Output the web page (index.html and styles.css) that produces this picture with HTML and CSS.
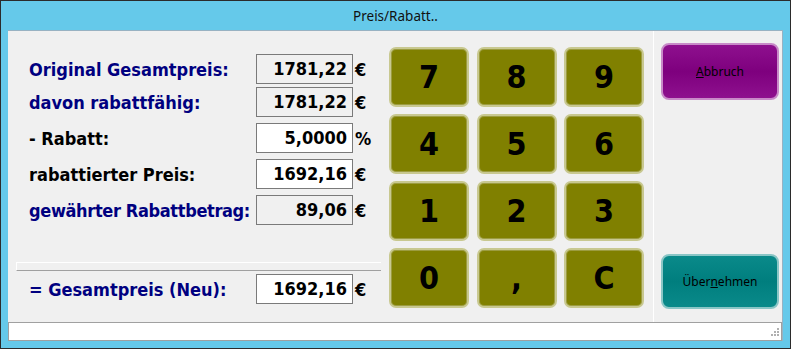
FILE: index.html
```html
<!DOCTYPE html>
<html lang="de">
<head>
<meta charset="utf-8">
<title>Preis/Rabatt..</title>
<link rel="stylesheet" href="styles.css">
</head>
<body>
<div class="window">
  <div class="titlebar">Preis/Rabatt..</div>
  <div class="client">
    <div class="main">
      <div class="form">
        <div class="row first"><span class="label navy">Original Gesamtpreis:</span><span class="box ro">1781,22</span><span class="unit">€</span></div>
        <div class="row tight"><span class="label navy">davon rabattfähig:</span><span class="box ro">1781,22</span><span class="unit">€</span></div>
        <div class="row"><span class="label">- Rabatt:</span><span class="box">5,0000</span><span class="unit">%</span></div>
        <div class="row"><span class="label">rabattierter Preis:</span><span class="box">1692,16</span><span class="unit">€</span></div>
        <div class="row"><span class="label navy narrow">gewährter Rabattbetrag:</span><span class="box ro">89,06</span><span class="unit">€</span></div>
        <div class="sep"></div>
        <div class="row total"><span class="label navy">= Gesamtpreis (Neu):</span><span class="box">1692,16</span><span class="unit">€</span></div>
      </div>
      <div class="keypad">
        <div class="key">7</div><div class="key">8</div><div class="key">9</div>
        <div class="key">4</div><div class="key">5</div><div class="key">6</div>
        <div class="key">1</div><div class="key">2</div><div class="key">3</div>
        <div class="key">0</div><div class="key">,</div><div class="key">C</div>
      </div>
      <div class="side">
        <div class="act abort"><span><u>A</u>bbruch</span></div>
        <div class="act ok"><span>Über<u>n</u>ehmen</span></div>
      </div>
    </div>
    <div class="status">
      <svg class="grip" width="12" height="12" viewBox="0 0 12 12">
        <rect x="9" y="1" width="2" height="2" fill="#b0b0b0"/>
        <rect x="6" y="4" width="2" height="2" fill="#b0b0b0"/>
        <rect x="9" y="4" width="2" height="2" fill="#b0b0b0"/>
        <rect x="3" y="7" width="2" height="2" fill="#b0b0b0"/>
        <rect x="6" y="7" width="2" height="2" fill="#b0b0b0"/>
        <rect x="9" y="7" width="2" height="2" fill="#b0b0b0"/>
      </svg>
    </div>
  </div>
</div>
</body>
</html>
```
FILE: styles.css
```css
* { box-sizing: border-box; }
body { margin: 0; font-family: "DejaVu Sans Condensed", "DejaVu Sans", sans-serif; }

.window {
  width: 791px; height: 349px;
  border: 1px solid #2b2b2b;
  background: #65c9ea;
  display: flex; flex-direction: column;
  padding: 0 7px 7px 7px;
}
.titlebar {
  height: 29px; flex: none;
  display: flex; align-items: center; justify-content: center;
  font: 13.5px "Noto Sans", sans-serif; color: #111;
  padding-top: 1px;
}
.client {
  flex: 1;
  display: flex; flex-direction: column;
  background: #f0f0f0;
  border-top: 1px solid #98b2c2;
  border-right: 1px solid #98b2c2;
}
.main { height: 291px; display: flex; flex: none; }

.form {
  width: 373px;
  padding: 23px 0 0 8px;
  display: flex; flex-direction: column;
}
.row {
  display: flex; align-items: center;
  height: 30px; padding-left: 13px;
  margin-top: 6px; flex: none;
}
.row.first { margin-top: 0; }
.row.tight { margin-top: 3px; }
.row.total { margin-top: 3px; }
.label {
  width: 227px;
  font-weight: bold; font-size: 18px; color: #000;
  white-space: nowrap;
}
.label.navy { color: #000080; }
.label.narrow { letter-spacing: -0.35px; }
.box {
  width: 97px; height: 30px; flex: none;
  border: 1px solid #7a7a7a;
  background: #fff;
  text-align: right;
  padding-right: 5px;
  font-weight: bold; font-size: 18px; line-height: 28px; color: #000;
}
.box.ro { background: #f0f0f0; }
.unit { margin-left: 2px; font-weight: bold; font-size: 18px; color: #000; }
.sep {
  margin-top: 37px; height: 9px; flex: none;
  border-top: 1px solid #fff; border-left: 1px solid #fff;
  border-bottom: 1px solid #a0a0a0;
}

.keypad {
  margin-left: 8px; padding-top: 16px;
  width: 255px;
  display: grid;
  grid-template-columns: repeat(3, 80px);
  grid-template-rows: repeat(4, 60px);
  column-gap: 7.5px; row-gap: 7px;
  align-content: start;
}
.key {
  background: #808000;
  border: 2px solid #c8c890;
  border-radius: 7px;
  box-shadow: inset 0 0 0 1px #9c9c40;
  display: flex; align-items: center; justify-content: center;
  font-weight: bold; font-size: 32px; color: #000;
}

.side {
  margin-left: 9px; width: 129px;
  border-left: 1px solid #fff;
  padding: 12px 0 13px 7px;
  display: flex; flex-direction: column; justify-content: space-between;
}
.act {
  width: 118px; border-radius: 8px;
  display: flex; align-items: center; justify-content: center;
  font: 12px "Noto Sans", sans-serif; color: #000;
}
.abort {
  height: 57px;
  background: linear-gradient(#8e108e, #7e007e 50%, #8e108e);
  border: 2px solid #c88ac8;
}
.ok {
  height: 55px;
  background: linear-gradient(#0a8a8a, #007e7e 50%, #0a8a8a);
  border: 2px solid #8ac6c6;
}

.status {
  height: 19px; flex: none;
  background: #fff;
  border: 1px solid #a0a0a0;
  display: flex; justify-content: flex-end; align-items: flex-end;
  padding: 0 1px 1px 0;
}
.grip { display: block; }
```
